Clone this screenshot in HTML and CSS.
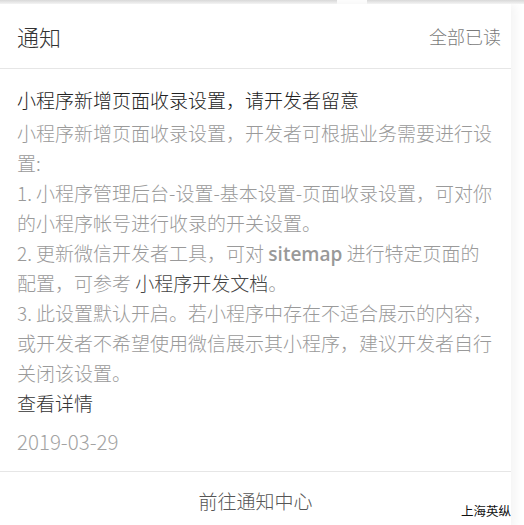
FILE: index.html
```html
<!DOCTYPE html>
<html>
<head>
    <title>通知</title>
    <link rel="stylesheet" href="styles.css">
</head>
<body>
    <div class="top-edge">
        <div class="edge-left"></div>
        <div class="edge-gap"></div>
        <div class="edge-right"></div>
    </div>
    <div class="popover">
        <div class="header">
            <span class="header-title">通知</span>
            <span class="read-all">全部已读</span>
        </div>
        <div class="notice">
            <p class="notice-title">小程序新增页面收录设置，请开发者留意</p>
            <p class="notice-text">小程序新增页面收录设置，开发者可根据业务需要进行设置:</p>
            <p class="notice-text">1. 小程序管理后台-设置-基本设置-页面收录设置，可对你的小程序帐号进行收录的开关设置。</p>
            <p class="notice-text">2. 更新微信开发者工具，可对 <span class="code">sitemap</span> 进行特定页面的配置，可参考 <a class="doc-link">小程序开发文档</a>。</p>
            <p class="notice-text">3. 此设置默认开启。若小程序中存在不适合展示的内容，或开发者不希望使用微信展示其小程序，建议开发者自行关闭该设置。</p>
            <a class="detail-link">查看详情</a>
            <div class="notice-date">2019-03-29</div>
        </div>
        <div class="footer">前往通知中心</div>
    </div>
    <div class="watermark">上海英纵</div>
</body>
</html>
```

FILE: styles.css
```css
body {
    font-family: "Noto Sans CJK SC", "Noto Sans", sans-serif;
    font-weight: 300;
    background-color: #fff;
    margin: 0;
    padding: 0;
    width: 524px;
    height: 525px;
    overflow: hidden;
    position: relative;
}

p {
    margin: 0;
}

.top-edge {
    display: flex;
    height: 4px;
}

.edge-left {
    width: 337px;
    background: linear-gradient(#d8d8d8, #f4f4f4);
}

.edge-gap {
    width: 30px;
}

.edge-right {
    flex: 1;
    background: linear-gradient(#d8d8d8, #f4f4f4);
}

.popover {
    width: 511px;
    background-color: #fff;
    box-shadow: 4px 0 10px rgba(0, 0, 0, 0.05);
}

.header {
    display: flex;
    justify-content: space-between;
    align-items: center;
    height: 64px;
    padding: 0 10px 0 17px;
    border-bottom: 1px solid #e6e6e6;
}

.header-title {
    font-size: 22px;
    color: #333;
}

.read-all {
    font-size: 18px;
    color: #7a7a7a;
}

.notice {
    padding: 16px 17px 15px 17px;
    font-size: 19px;
    line-height: 30px;
    border-bottom: 1px solid #e6e6e6;
}

.notice-title {
    color: #222;
    margin-bottom: 3px;
}

.notice-text {
    color: #9a9a9a;
}

.code {
    font-family: "Open Sans", "Noto Sans", sans-serif;
    font-weight: 600;
    line-height: 1;
    color: #999;
}

.doc-link {
    color: #444;
}

.detail-link {
    display: block;
    color: #333;
}

.notice-date {
    font-size: 20.5px;
    color: #a3a3a3;
    margin-top: 8px;
}

.footer {
    text-align: center;
    font-size: 19px;
    color: #555;
    height: 58px;
    line-height: 58px;
}

.watermark {
    position: absolute;
    right: 13px;
    bottom: 5px;
    font-size: 12.5px;
    font-weight: 400;
    color: #111;
}
```
